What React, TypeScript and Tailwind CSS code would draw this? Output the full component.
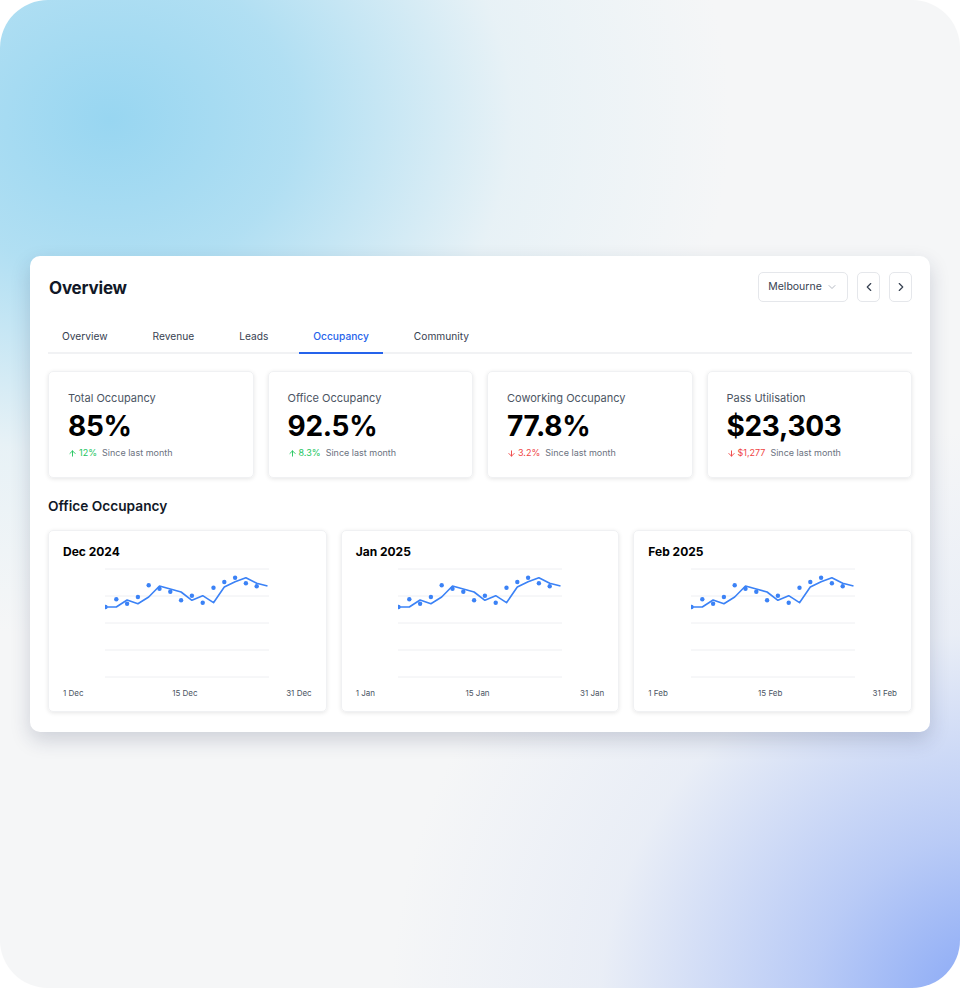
import React from 'react';
import { ChevronDown, ChevronLeft, ChevronRight, ArrowUp, ArrowDown } from 'lucide-react';

const tabs = ['Overview', 'Revenue', 'Leads', 'Occupancy', 'Community'];

const stats = [
  { label: 'Total Occupancy', value: '85%', change: '12%', up: true },
  { label: 'Office Occupancy', value: '92.5%', change: '8.3%', up: true },
  { label: 'Coworking Occupancy', value: '77.8%', change: '3.2%', up: false },
  { label: 'Pass Utilisation', value: '$23,303', change: '$1,277', up: false },
];

const months = [
  { title: 'Dec 2024', m: 'Dec' },
  { title: 'Jan 2025', m: 'Jan' },
  { title: 'Feb 2025', m: 'Feb' },
];

// y offsets from the top gridline
const line = [38, 38, 31, 34.7, 28, 17, 20, 23, 31.3, 26.7, 33.7, 18, 12.7, 8.7, 14.3, 17];
const dots = [38, 30.3, 34.7, 28, 16.3, 19.7, 22.7, 31.3, 26.7, 33.7, 18.7, 13, 8.7, 14.3, 17.3];
const step = 162 / 15;

const Chart: React.FC = () => {
  const pts = line.map((y, i) => `${(i * step + 0.5).toFixed(1)},${(y + 1).toFixed(1)}`).join(' ');
  return (
    <svg width="164" height="110" viewBox="0 0 164 110" className="mx-auto block">
      {[0, 27, 54, 81, 108].map((y) => (
        <line key={y} x1="0" x2="164" y1={y + 1} y2={y + 1} stroke="#eeeff2" strokeWidth="1" />
      ))}
      <polyline points={pts} fill="none" stroke="#3b82f6" strokeWidth="1.6" strokeLinejoin="round" />
      {dots.map((y, i) => (
        <circle key={i} cx={i * step + 0.5} cy={y + 1} r="2.2" fill="#3b82f6" />
      ))}
    </svg>
  );
};

export default function App() {
  return (
    <div className="w-[960px] h-[988px] bg-white" style={{ fontFamily: 'Inter, "Noto Sans", sans-serif' }}>
      <div
        className="relative w-full h-full rounded-[48px] overflow-hidden px-[30px] pt-[256px]"
        style={{
          background:
            'radial-gradient(ellipse 620px 520px at 110px 120px, rgba(152,214,241,1) 0%, rgba(165,219,242,0.85) 30%, rgba(215,236,245,0.45) 65%, rgba(245,246,247,0) 100%), radial-gradient(ellipse 600px 580px at 990px 1010px, rgba(132,165,246,1) 0%, rgba(170,192,246,0.8) 30%, rgba(215,225,245,0.4) 65%, rgba(245,246,247,0) 100%), #f5f6f7',
        }}
      >
        <div className="bg-white rounded-[10px] shadow-[0_8px_20px_rgba(30,40,80,0.18)] px-[18px] pt-4 pb-5">
          {/* Header */}
          <div className="flex items-center justify-between">
            <h1 className="text-[17px] font-bold text-[#111827] tracking-[-0.2px] pl-px pt-[3px]">Overview</h1>
            <div className="flex items-center gap-[9px]">
              <button className="h-[30px] w-[90px] border border-[#e5e7eb] rounded-[5px] flex items-center justify-center gap-1 text-[10.5px] text-[#374151]">
                Melbourne <ChevronDown className="w-3 h-3 text-[#9ca3af]" strokeWidth={1.5} />
              </button>
              <button className="h-[30px] w-[23px] border border-[#e5e7eb] rounded-[5px] flex items-center justify-center text-[#374151]">
                <ChevronLeft className="w-3.5 h-3.5" strokeWidth={2} />
              </button>
              <button className="h-[30px] w-[23px] border border-[#e5e7eb] rounded-[5px] flex items-center justify-center text-[#374151]">
                <ChevronRight className="w-3.5 h-3.5" strokeWidth={2} />
              </button>
            </div>
          </div>

          {/* Tabs */}
          <div className="flex gap-[17px] border-b-2 border-[#f1f2f4] mt-[27px]">
            {tabs.map((t) => {
              const active = t === 'Occupancy';
              return (
                <div
                  key={t}
                  className={`px-[14px] pb-[8px] text-[10.2px] -mb-[2px] border-b-2 ${
                    active ? 'border-[#2563eb] text-[#2563eb] font-medium' : 'border-transparent text-[#374151]'
                  }`}
                >
                  {t}
                </div>
              );
            })}
          </div>

          {/* Stat cards */}
          <div className="grid grid-cols-4 gap-[14px] mt-[17px]">
            {stats.map((s) => (
              <div key={s.label} className="h-[107px] rounded-[5px] border border-[#f0f1f3] shadow-[0_1px_4px_rgba(0,0,0,0.10)] px-[19px] pt-[18px]">
                <div className="text-[11px] text-[#4b5563] leading-4">{s.label}</div>
                <div className="text-[28px] font-bold text-black leading-[32px] mt-[4px] tracking-[-0.3px]">{s.value}</div>
                <div className="flex items-center text-[9px] mt-[4px]">
                  <span className={`flex items-center gap-[2px] ${s.up ? 'text-[#22c55e]' : 'text-[#ef4444]'}`}>
                    {s.up ? <ArrowUp className="w-[9px] h-[9px]" strokeWidth={2.5} /> : <ArrowDown className="w-[9px] h-[9px]" strokeWidth={2.5} />}
                    {s.change}
                  </span>
                  <span className="text-[#6b7280] ml-[5px]">Since last month</span>
                </div>
              </div>
            ))}
          </div>

          {/* Office occupancy */}
          <h2 className="text-[13.7px] font-semibold text-[#111827] mt-[18px] leading-5">Office Occupancy</h2>
          <div className="grid grid-cols-3 gap-[14px] mt-[14px]">
            {months.map((mo) => (
              <div key={mo.title} className="h-[182px] rounded-[5px] border border-[#f0f1f3] shadow-[0_1px_4px_rgba(0,0,0,0.10)] px-[14px] pt-[13px]">
                <div className="text-[12px] font-bold text-black leading-4">{mo.title}</div>
                <div className="mt-[8px]">
                  <Chart />
                </div>
                <div className="flex justify-between text-[8px] text-[#4b5563] mt-[9px]">
                  <span>1 {mo.m}</span>
                  <span>15 {mo.m}</span>
                  <span>31 {mo.m}</span>
                </div>
              </div>
            ))}
          </div>
        </div>
      </div>
    </div>
  );
}
